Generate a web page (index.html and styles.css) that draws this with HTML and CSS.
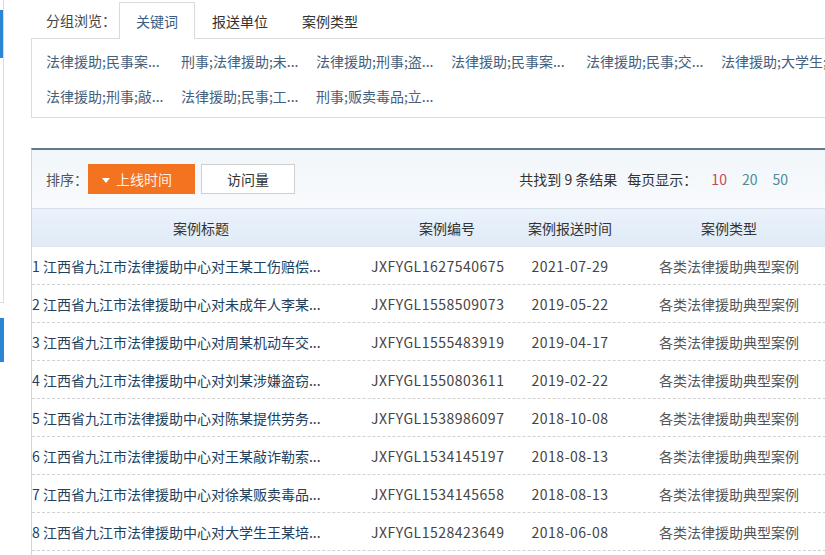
FILE: index.html
```html
<!DOCTYPE html>
<html lang="zh-CN">
<head>
<meta charset="utf-8">
<title>案例列表</title>
<link rel="stylesheet" href="styles.css">
</head>
<body>
<div class="page">
  <aside class="side">
    <div class="side-panel"><div class="side-mark"></div></div>
    <div class="side-mark side-mark-2"></div>
  </aside>
  <main class="main">
    <div class="tabs">
      <span class="tabs-label">分组浏览：</span>
      <span class="tab tab-active">关键词</span>
      <span class="tab">报送单位</span>
      <span class="tab">案例类型</span>
    </div>
    <div class="keywords">
      <a class="kw">法律援助;民事案...</a>
      <a class="kw">刑事;法律援助;未...</a>
      <a class="kw">法律援助;刑事;盗...</a>
      <a class="kw">法律援助;民事案...</a>
      <a class="kw">法律援助;民事;交...</a>
      <a class="kw">法律援助;大学生;...</a>
      <a class="kw">法律援助;刑事;敲...</a>
      <a class="kw">法律援助;民事;工...</a>
      <a class="kw">刑事;贩卖毒品;立...</a>
    </div>
    <div class="list">
      <div class="sortbar">
        <span class="sort-label">排序：</span>
        <button class="btn btn-on"><span class="tri"></span>上线时间</button>
        <button class="btn btn-plain">访问量</button>
        <div class="stats">
          <span>共找到 9 条结果</span>
          <span class="perpage">每页显示：</span>
          <a class="pp pp-on">10</a>
          <a class="pp">20</a>
          <a class="pp">50</a>
        </div>
      </div>
      <div class="thead">
        <span>案例标题</span>
        <span>案例编号</span>
        <span>案例报送时间</span>
        <span>案例类型</span>
        <span></span>
      </div>
      <div class="row"><span class="c-title">1 江西省九江市法律援助中心对王某工伤赔偿...</span><span class="c-code">JXFYGL1627540675</span><span class="c-date">2021-07-29</span><span class="c-type">各类法律援助典型案例</span><span></span></div>
      <div class="row"><span class="c-title">2 江西省九江市法律援助中心对未成年人李某...</span><span class="c-code">JXFYGL1558509073</span><span class="c-date">2019-05-22</span><span class="c-type">各类法律援助典型案例</span><span></span></div>
      <div class="row"><span class="c-title">3 江西省九江市法律援助中心对周某机动车交...</span><span class="c-code">JXFYGL1555483919</span><span class="c-date">2019-04-17</span><span class="c-type">各类法律援助典型案例</span><span></span></div>
      <div class="row"><span class="c-title">4 江西省九江市法律援助中心对刘某涉嫌盗窃...</span><span class="c-code">JXFYGL1550803611</span><span class="c-date">2019-02-22</span><span class="c-type">各类法律援助典型案例</span><span></span></div>
      <div class="row"><span class="c-title">5 江西省九江市法律援助中心对陈某提供劳务...</span><span class="c-code">JXFYGL1538986097</span><span class="c-date">2018-10-08</span><span class="c-type">各类法律援助典型案例</span><span></span></div>
      <div class="row"><span class="c-title">6 江西省九江市法律援助中心对王某敲诈勒索...</span><span class="c-code">JXFYGL1534145197</span><span class="c-date">2018-08-13</span><span class="c-type">各类法律援助典型案例</span><span></span></div>
      <div class="row"><span class="c-title">7 江西省九江市法律援助中心对徐某贩卖毒品...</span><span class="c-code">JXFYGL1534145658</span><span class="c-date">2018-08-13</span><span class="c-type">各类法律援助典型案例</span><span></span></div>
      <div class="row"><span class="c-title">8 江西省九江市法律援助中心对大学生王某培...</span><span class="c-code">JXFYGL1528423649</span><span class="c-date">2018-06-08</span><span class="c-type">各类法律援助典型案例</span><span></span></div>
    </div>
  </main>
</div>
</body>
</html>
```
FILE: styles.css
```css
html, body {
  margin: 0;
  padding: 0;
  overflow: hidden;
  background: #fff;
}
body {
  font-family: "Noto Sans CJK SC", "Microsoft YaHei", sans-serif;
  font-size: 14px;
  color: #333;
}
.page {
  display: flex;
  width: 861px;
}
.side {
  width: 31px;
  flex-shrink: 0;
  display: flex;
  flex-direction: column;
}
.side-panel {
  width: 3px;
  height: 292px;
  box-sizing: border-box;
  padding-top: 10px;
  border-right: 1px solid #dcdcdc;
  border-bottom: 1px solid #dcdcdc;
  box-sizing: content-box;
}
.side-mark {
  width: 100%;
  height: 48px;
  background: #2b84d4;
}
.side-mark-2 {
  width: 4px;
  height: 44px;
  margin-top: 15px;
}
.main {
  width: 830px;
  flex-shrink: 0;
}
.tabs {
  display: flex;
  align-items: flex-end;
  height: 38px;
  padding-left: 15px;
}
.tabs-label {
  line-height: 36px;
  margin-right: 3px;
  color: #444;
}
.tab {
  position: relative;
  height: 36px;
  line-height: 36px;
  padding: 0 16px;
  border: 1px solid transparent;
  border-bottom: 0;
  margin-bottom: -1px;
  color: #333;
}
.tab-active {
  border-color: #dadada;
  background: #fff;
  color: #3b5d7f;
}
.keywords {
  border: 1px solid #dddddd;
  border-right: 0;
  height: 73px;
  padding: 5px 0 0 14px;
  display: flex;
  flex-wrap: wrap;
  align-content: flex-start;
}
.kw {
  width: 135px;
  height: 35px;
  line-height: 35px;
  white-space: nowrap;
  color: #44607c;
  text-decoration: none;
}
.list {
  margin-top: 30px;
  border-top: 2px solid #62798a;
  border-left: 1px solid #d5d5d5;
  padding-bottom: 20px;
}
.sortbar {
  height: 58px;
  display: flex;
  align-items: center;
  padding-left: 14px;
  background: linear-gradient(#f1f6fa, #f9fbfd);
  border-bottom: 1px solid #d6dee6;
}
.sort-label {
  width: 42px;
  color: #555;
}
.btn {
  height: 30px;
  box-sizing: border-box;
  font: inherit;
  border: 1px solid #cfcfcf;
  background: #fff;
  color: #333;
  padding: 0;
  display: flex;
  align-items: center;
  justify-content: center;
}
.btn-on {
  width: 107px;
  background: #f47320;
  border-color: #f47320;
  color: #fff0e4;
  justify-content: flex-start;
  padding-left: 13px;
  gap: 6px;
}
.btn-plain {
  width: 94px;
  margin-left: 6px;
}
.tri {
  width: 0;
  height: 0;
  border-left: 4px solid transparent;
  border-right: 4px solid transparent;
  border-top: 5px solid #fff;
  margin-top: 2px;
}
.stats {
  margin-left: auto;
  padding-right: 73px;
  display: flex;
  align-items: center;
  color: #333;
  white-space: pre;
}
.perpage {
  margin-left: 10px;
}
.pp {
  margin-left: 15px;
  color: #4d8a98;
  text-decoration: none;
}
.pp-on {
  margin-left: 14px;
  color: #c9465a;
}
.thead,
.row {
  display: grid;
  grid-template-columns: 338px 154px 92px 226px 1fr;
  align-items: center;
  height: 37px;
}
.thead {
  background: linear-gradient(#eaf2fb, #e0ebf7);
  border-bottom: 1px solid #dfe6ee;
  text-align: center;
  color: #333;
}
.row {
  border-bottom: 1px dashed #d2d2d2;
  white-space: nowrap;
}
.c-title {
  color: #233f5c;
}
.c-code {
  padding-left: 1px;
  color: #444;
  letter-spacing: 0.5px;
}
.c-date {
  text-align: center;
  color: #444;
  letter-spacing: 0.5px;
}
.c-type {
  text-align: center;
  color: #555;
}
```
